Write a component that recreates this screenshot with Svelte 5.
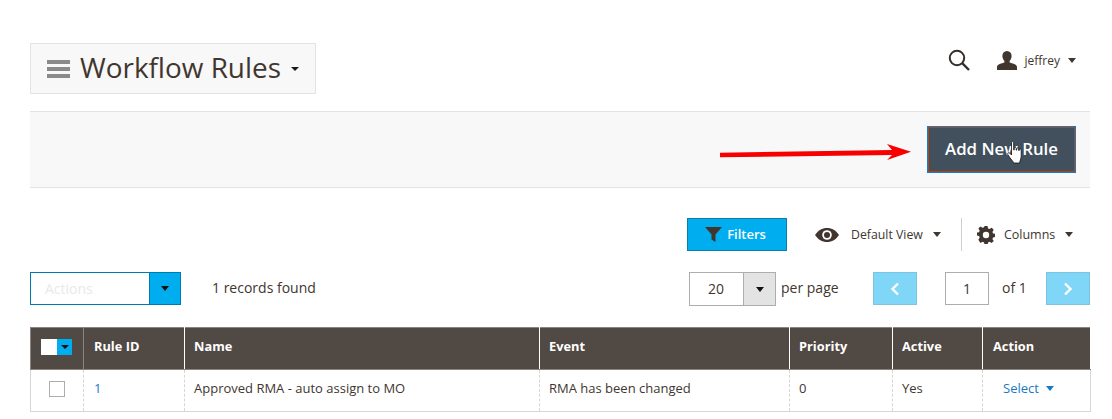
<script>
    const columns = [
        { label: "Rule ID", width: 101 },
        { label: "Name", width: 355 },
        { label: "Event", width: 250 },
        { label: "Priority", width: 103 },
        { label: "Active", width: 90 },
        { label: "Action", width: 108 }
    ];
</script>

<main>
    <header class="top">
        <div class="title">
            <span class="burger"><i></i><i></i><i></i></span>
            <h1>Workflow Rules</h1>
            <span class="caret small"></span>
        </div>
        <div class="account">
            <svg class="search" width="24" height="24" viewBox="0 0 24 24">
                <circle cx="10" cy="10" r="7.2" fill="none" stroke="#372f2a" stroke-width="2" />
                <path d="M15.2 15.2 L22 22" stroke="#372f2a" stroke-width="2.4" fill="none" />
            </svg>
            <svg class="user" width="20" height="19" viewBox="0 0 20 19">
                <path d="M10 0c3 0 4.600 2.200 4.600 5 0 2.200-1 4-2 5v1.600c2.400.8 7.400 1.800 7.400 4.400v3H0v-3c0-2.600 5-3.600 7.400-4.400V10c-1-1-2-2.800-2-5C5.400 2.200 7 0 10 0z" fill="#41362f" />
            </svg>
            <span class="username">jeffrey</span>
            <span class="caret tiny"></span>
        </div>
    </header>

    <section class="band">
        <button class="add">Add New Rule</button>
        <svg class="arrow" width="194" height="20" viewBox="0 0 194 20">
            <path d="M0 9.700 L172 7 L167 1 L191 8.700 L167 17 L172 12 L0 14.300 Z" fill="#f60000" />
        </svg>
        <svg class="hand" width="17" height="23" viewBox="0 0 17 23">
            <path d="M4.500 1.600c0-1.400 2.200-1.400 2.200 0V9h.5V7.200c0-1.200 2-1.200 2 0V9.200h.5V7.800c0-1.200 2-1.200 2 0v1.700h.5V8.800c0-1.200 2-1.200 2 0V15c0 2.500-1.200 4-1.500 7H6.500c-.5-2.200-2.300-3.300-3.700-5.400L.8 13.500c-.8-1.300 1-2.500 2-1.300L4.500 14z" fill="#fff" stroke="#111" stroke-width=".8" />
        </svg>
    </section>

    <div class="controls">
        <button class="filters">
            <svg width="18" height="15" viewBox="0 0 18 15"><path d="M0 0h17L10.500 7.500V15L6.500 12.500V7.500z" fill="#41362f" /></svg>
            <span>Filters</span>
        </button>
        <div class="view">
            <svg width="24" height="14" viewBox="0 0 24 14">
                <path d="M0 7C3 2.500 7 0 12 0s9 2.500 12 7c-3 4.500-7 7-12 7S3 11.500 0 7z" fill="#41362f" />
                <circle cx="12" cy="7" r="4.800" fill="#fff" />
                <circle cx="12" cy="7" r="3" fill="#41362f" />
            </svg>
            <span class="view-label">Default View</span>
            <span class="caret tiny"></span>
        </div>
        <div class="cols">
            <svg width="18" height="18" viewBox="0 0 18 18">
                <path d="M7.400 0h3.200l.5 2.500 1.600.7 2.200-1.400 2.200 2.200-1.400 2.200.7 1.600 2.500.5v3.200l-2.500.5-.7 1.600 1.400 2.200-2.200 2.200-2.200-1.400-1.600.7-.5 2.500H7.400l-.5-2.500-1.600-.7-2.200 1.400L.9 14.400l1.400-2.200-.7-1.600L-.900 10V7l2.500-.5.700-1.600L.9 2.700l2.200-2.200 2.200 1.400 1.600-.7z" fill="#41362f" transform="translate(.5 0) scale(.95)" />
                <circle cx="9" cy="9" r="3.200" fill="#fff" />
            </svg>
            <span class="cols-label">Columns</span>
            <span class="caret tiny"></span>
        </div>
    </div>

    <div class="pager-row">
        <div class="actions">
            <span class="actions-label">Actions</span>
            <span class="actions-toggle"><span class="caret tiny dark"></span></span>
        </div>
        <span class="records">1 records found</span>
        <div class="per-page">
            <span class="page-size">20</span>
            <span class="size-toggle"><span class="caret tiny dark"></span></span>
        </div>
        <span class="per-label">per page</span>
        <button class="nav prev" aria-label="Previous">
            <svg width="10" height="14" viewBox="0 0 10 14"><path d="M8 1.500 L2.500 7 L8 12.500" fill="none" stroke="#fff" stroke-width="2.400" /></svg>
        </button>
        <span class="page-num">1</span>
        <span class="of">of 1</span>
        <button class="nav next" aria-label="Next">
            <svg width="10" height="14" viewBox="0 0 10 14"><path d="M2 1.500 L7.500 7 L2 12.500" fill="none" stroke="#fff" stroke-width="2.400" /></svg>
        </button>
    </div>

    <table>
        <thead>
            <tr>
                <th class="check-col">
                    <span class="mass"><span class="mass-box"></span><span class="mass-toggle"><span class="caret micro dark"></span></span></span>
                </th>
                {#each columns as col}
                    <th style="width: {col.width}px">{col.label}</th>
                {/each}
            </tr>
        </thead>
        <tbody>
            <tr>
                <td class="check-cell"><span class="box"></span></td>
                <td><span class="link">1</span></td>
                <td>Approved RMA - auto assign to MO</td>
                <td>RMA has been changed</td>
                <td>0</td>
                <td>Yes</td>
                <td class="select-cell"><span class="link">Select</span><span class="caret tiny blue"></span></td>
            </tr>
        </tbody>
    </table>
</main>

<style>
    :global(body) {
        background: #fff;
    }

    main {
        width: 1060px;
        padding: 43px 0 0 30px;
        font-family: "Open Sans", sans-serif;
        font-size: 14px;
        color: #41362f;
    }

    .caret {
        display: inline-block;
        width: 0;
        height: 0;
        border-style: solid;
        border-color: #41362f transparent transparent transparent;
    }

    .caret.small {
        border-width: 4px 4px 0 4px;
        border-top-color: #1a1a1a;
    }

    .caret.tiny {
        border-width: 5px 4px 0 4px;
    }

    .caret.micro {
        border-width: 4px 4px 0 4px;
    }

    .caret.dark {
        border-top-color: #111;
    }

    .caret.blue {
        border-top-color: #1979c3;
    }

    .top {
        display: flex;
        justify-content: space-between;
        align-items: flex-start;
        height: 68px;
    }

    .title {
        display: flex;
        align-items: center;
        box-sizing: border-box;
        width: 286px;
        height: 51px;
        padding-left: 16px;
        background: #f8f8f8;
        border: 1px solid #e3e3e3;
    }

    .burger {
        display: flex;
        flex-direction: column;
        gap: 3px;
        width: 23px;
        margin-right: 10px;
    }

    .burger i {
        display: block;
        height: 4px;
        background: #8a8a8a;
    }

    h1 {
        margin: 0 10px 2px 0;
        font-size: 27.900px;
        font-weight: 400;
        line-height: 1;
        color: #41362f;
    }

    .account {
        display: flex;
        align-items: center;
        margin: 5px 14px 0 0;
    }

    .user {
        margin: 0 8px 0 26px;
    }

    .username {
        margin-right: 8px;
        font-size: 12px;
    }

    .band {
        position: relative;
        display: flex;
        justify-content: flex-end;
        box-sizing: border-box;
        height: 77px;
        padding: 14px 14px 0 0;
        background: #f8f8f8;
        border-top: 1px solid #e3e3e3;
        border-bottom: 1px solid #e3e3e3;
    }

    .add {
        width: 149px;
        height: 47px;
        padding: 0 0 2px;
        background: #41505c;
        border: 2px solid;
        border-color: #a5481a;
        outline: 1px solid #1979c3;
        outline-offset: -1px;
        color: #fff;
        font-family: inherit;
        font-size: 16.800px;
        font-weight: 600;
    }

    .arrow {
        position: absolute;
        left: 690px;
        top: 31px;
    }

    .hand {
        position: absolute;
        left: 977px;
        top: 29px;
    }

    .controls {
        display: flex;
        align-items: center;
        height: 33px;
        margin-top: 30px;
        padding-left: 657px;
    }

    .filters {
        display: flex;
        align-items: center;
        justify-content: center;
        gap: 4px;
        box-sizing: border-box;
        width: 100px;
        height: 33px;
        padding: 0 3px 0 0;
        background: #00aeef;
        border: 1px solid #0a7fa8;
        color: #fff;
        font-family: inherit;
        font-size: 13px;
        font-weight: 600;
    }

    .filters span {
        margin-bottom: 2px;
    }

    .view {
        display: flex;
        align-items: center;
        margin-left: 28px;
        padding-right: 20px;
        border-right: 1px solid #cfcfcf;
        height: 33px;
    }

    .view-label {
        margin: 0 10px 0 12px;
        font-size: 12.300px;
    }

    .cols {
        display: flex;
        align-items: center;
        margin-left: 15px;
    }

    .cols-label {
        margin: 0 10px 1px 9px;
        font-size: 12.500px;
    }

    .pager-row {
        display: flex;
        align-items: flex-start;
        height: 34px;
        margin-top: 21px;
        line-height: 32px;
    }

    .actions {
        display: flex;
        box-sizing: border-box;
        width: 151px;
        height: 33px;
        border: 1px solid #007bad;
    }

    .actions-label {
        flex: 1;
        padding-left: 14px;
        line-height: 31px;
        font-size: 14px;
        color: #e9e9e9;
    }

    .actions-toggle {
        display: flex;
        align-items: center;
        justify-content: center;
        width: 30px;
        background: #00aeef;
        border-left: 1px solid #007bad;
    }

    .records {
        margin-left: 31px;
        width: 477px;
    }

    .per-page {
        display: flex;
        box-sizing: border-box;
        width: 87px;
        height: 34px;
        border: 1px solid #adadad;
    }

    .page-size {
        box-sizing: border-box;
        width: 53px;
        padding-right: 1px;
        text-align: center;
        line-height: 32px;
    }

    .size-toggle {
        display: flex;
        align-items: center;
        justify-content: center;
        flex: 1;
        background: #e3e3e3;
        border-left: 1px solid #adadad;
    }

    .per-label {
        margin-left: 5px;
        width: 92px;
    }

    .nav {
        display: flex;
        align-items: center;
        justify-content: center;
        box-sizing: border-box;
        width: 44px;
        height: 33px;
        padding: 0;
        background: #7fd6f7;
        border: 1px solid #7cc4e0;
    }

    .page-num {
        box-sizing: border-box;
        width: 44px;
        height: 33px;
        margin-left: 28px;
        border: 1px solid #adadad;
        text-align: center;
        line-height: 31px;
    }

    .of {
        margin-left: 13px;
        width: 44px;
    }

    table {
        width: 1060px;
        margin-top: 21px;
        border-collapse: collapse;
        table-layout: fixed;
    }

    th {
        box-sizing: border-box;
        height: 42px;
        padding: 0 9px 5px;
        background: #514943;
        border: 1px solid #8a837f;
        border-left-color: #fff;
        border-right-color: #fff;
        color: #fff;
        font-size: 12.800px;
        font-weight: 700;
        text-align: left;
    }

    th:first-child {
        border-left-color: #8a837f;
    }

    th:nth-child(2),
    th:last-child,
    td:nth-child(2) {
        padding-left: 10px;
    }

    .check-col {
        width: 53px;
        padding: 0 0 3px 10px;
        border-right-color: #8a837f;
    }

    .mass {
        display: flex;
    }

    .mass-box {
        width: 16px;
        height: 16px;
        background: #fff;
    }

    .mass-toggle {
        display: flex;
        align-items: center;
        justify-content: center;
        width: 15px;
        height: 16px;
        background: #00aeef;
    }

    td {
        box-sizing: border-box;
        height: 42px;
        padding: 0 9px 5px;
        border-left: 1px dashed #d6d6d6;
        border-right: 1px dashed #d6d6d6;
        border-bottom: 1px solid #d6d6d6;
        font-size: 13px;
    }

    td:first-child {
        border-left: 1px solid #d6d6d6;
    }

    td:last-child {
        border-right: 1px solid #d6d6d6;
    }

    .check-cell {
        padding: 0 0 3px;
        text-align: center;
    }

    .box {
        display: block;
        box-sizing: border-box;
        width: 16px;
        height: 16px;
        margin: 0 auto;
        border: 1px solid #adadad;
    }

    .link {
        color: #1979c3;
    }

    .select-cell {
        padding-left: 20px;
    }

    .select-cell .caret {
        margin-left: 7px;
        vertical-align: 2px;
    }
</style>
